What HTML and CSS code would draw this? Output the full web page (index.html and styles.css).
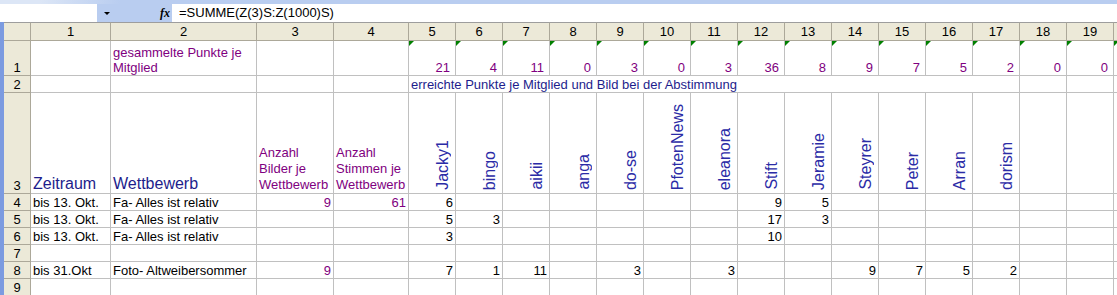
FILE: index.html
```html
<!DOCTYPE html>
<html lang="de">

<head>
    <meta charset="UTF-8">
    <meta name="viewport" content="width=device-width, initial-scale=1.0">
    <title>Punkte je Mitglied</title>
    <link rel="stylesheet" href="styles.css">
</head>

<body>
    <div class="top-strip"></div>

    <div class="formula-bar">
        <div class="name-box"></div>
        <div class="fb-tools">
            <span class="dropdown"></span>
            <span class="fx">fx</span>
        </div>
        <div class="formula">=SUMME(Z(3)S:Z(1000)S)</div>
    </div>

    <div class="sheet" id="sheet"></div>

    <script>
        const totals = [21, 4, 11, 0, 3, 0, 3, 36, 8, 9, 7, 5, 2, 0, 0];
        const names = ['Jacky1', 'bingo', 'aikii', 'anga', 'do-se', 'PfotenNews', 'eleanora',
            'Stift', 'Jeramie', 'Steyrer', 'Peter', 'Arran', 'dorism'];

        const rows = [
            { r: 4, a: 'bis 13. Okt.', b: 'Fa- Alles ist relativ', c: 9, d: 61, v: { 5: 6, 12: 9, 13: 5 } },
            { r: 5, a: 'bis 13. Okt.', b: 'Fa- Alles ist relativ', v: { 5: 5, 6: 3, 12: 17, 13: 3 } },
            { r: 6, a: 'bis 13. Okt.', b: 'Fa- Alles ist relativ', v: { 5: 3, 12: 10 } },
            { r: 7, v: {} },
            { r: 8, a: 'bis 31.Okt', b: 'Foto- Altweibersommer', c: 9, v: { 5: 7, 6: 1, 7: 11, 9: 3, 11: 3, 14: 9, 15: 7, 16: 5, 17: 2 } },
            { r: 9, v: {} }
        ];

        function cell(cls, text) {
            return `<div class="cell ${cls}">${text ?? ''}</div>`;
        }

        function rowHead(n) {
            return cell('rh', n);
        }

        // column headers (the 20th column is only a sliver at the edge)
        let html = cell('hdr corner');
        for (let c = 1; c <= 19; c++) html += cell('hdr', c);
        html += cell('hdr');

        // row 1: totals
        html += rowHead(1) + cell('') + cell('purple wrap', 'gesammelte Punkte je<br>Mitglied') + cell('') + cell('');
        totals.forEach(t => html += cell('num total purple flag', t));
        html += cell('flag');

        // row 2: merged caption
        html += rowHead(2) + cell('') + cell('') + cell('') + cell('');
        html += cell('merged navy', 'erreichte Punkte je Mitglied und Bild bei der Abstimmung');
        html += cell('') + cell('') + cell('');

        // row 3: headings + member names
        html += rowHead(3) + cell('title navy', 'Zeitraum') + cell('title navy', 'Wettbewerb');
        html += cell('purple wrap tall', 'Anzahl<br>Bilder je<br>Wettbewerb');
        html += cell('purple wrap tall', 'Anzahl<br>Stimmen je<br>Wettbewerb');
        names.forEach(n => html += cell('name', `<span>${n}</span>`));
        html += cell('') + cell('') + cell('');

        rows.forEach(row => {
            html += rowHead(row.r) + cell('', row.a) + cell('', row.b);
            html += cell('num purple', row.c) + cell('num purple', row.d);
            for (let c = 5; c <= 19; c++) html += cell('num', row.v[c]);
            html += cell('');
        });

        document.getElementById('sheet').innerHTML = html;
    </script>
</body>

</html>
```

FILE: styles.css
```css
body {
    margin: 0;
    width: 1117px;
    height: 295px;
    overflow: hidden;
    background-color: #fff;
    font-family: "Liberation Sans", Arial, sans-serif;
    font-size: 13px;
    color: #000;
}

.top-strip {
    height: 4px;
    background: linear-gradient(to right, #dce6f6 0, #dce6f6 40px, #b9cdf0 120px);
}

.formula-bar {
    display: flex;
    height: 18px;
}

.name-box {
    width: 97px;
    background-color: #fff;
}

.fb-tools {
    width: 75px;
    display: flex;
    align-items: center;
    background-color: #b9cdf0;
}

.dropdown {
    width: 0;
    height: 0;
    margin-left: 7px;
    border-left: 3px solid transparent;
    border-right: 3px solid transparent;
    border-top: 3px solid #000;
}

.fx {
    margin-left: 50px;
    font-family: "Liberation Serif", serif;
    font-style: italic;
    font-weight: bold;
    font-size: 12px;
}

.formula {
    flex: 1;
    padding-left: 7px;
    line-height: 18px;
    background-color: #fff;
}

.sheet {
    display: grid;
    grid-template-columns: 27px 80px 146px 77px 75px repeat(15, 47px) 1fr;
    grid-template-rows: 19px 35px 17px 101px repeat(6, 17px);
    border-left: 4px solid #7c9be0;
}

.cell {
    box-sizing: border-box;
    display: flex;
    align-items: flex-end;
    min-width: 0;
    padding: 0 2px;
    border-right: 1px solid #c0c0c0;
    border-bottom: 1px solid #c0c0c0;
    line-height: 15px;
    white-space: nowrap;
    overflow: hidden;
}

.hdr {
    align-items: center;
    justify-content: center;
    background-color: #ece9d8;
    border-top: 1px solid #9d9d9d;
    border-right-color: #aca899;
    border-bottom-color: #aca899;
}

.rh {
    justify-content: center;
    background-color: #ece9d8;
    border-right-color: #aca899;
    border-bottom-color: #aca899;
}

.num {
    justify-content: flex-end;
}

.total {
    padding-right: 5px;
}

.flag {
    position: relative;
}

.flag::before {
    content: "";
    position: absolute;
    top: 0;
    left: 0;
    border-top: 5px solid #008000;
    border-right: 5px solid transparent;
}

.purple {
    color: #800080;
}

.navy {
    color: #1d1d8c;
}

.wrap {
    white-space: normal;
}

.tall {
    line-height: 16px;
}

.title {
    font-size: 16px;
    line-height: 18px;
}

.merged {
    grid-column: span 13;
}

.name {
    justify-content: flex-end;
    padding: 0 3px 3px 0;
}

.name span {
    writing-mode: vertical-rl;
    transform: rotate(180deg);
    font-size: 16px;
    line-height: 18px;
    color: #2b2ba6;
}
```
